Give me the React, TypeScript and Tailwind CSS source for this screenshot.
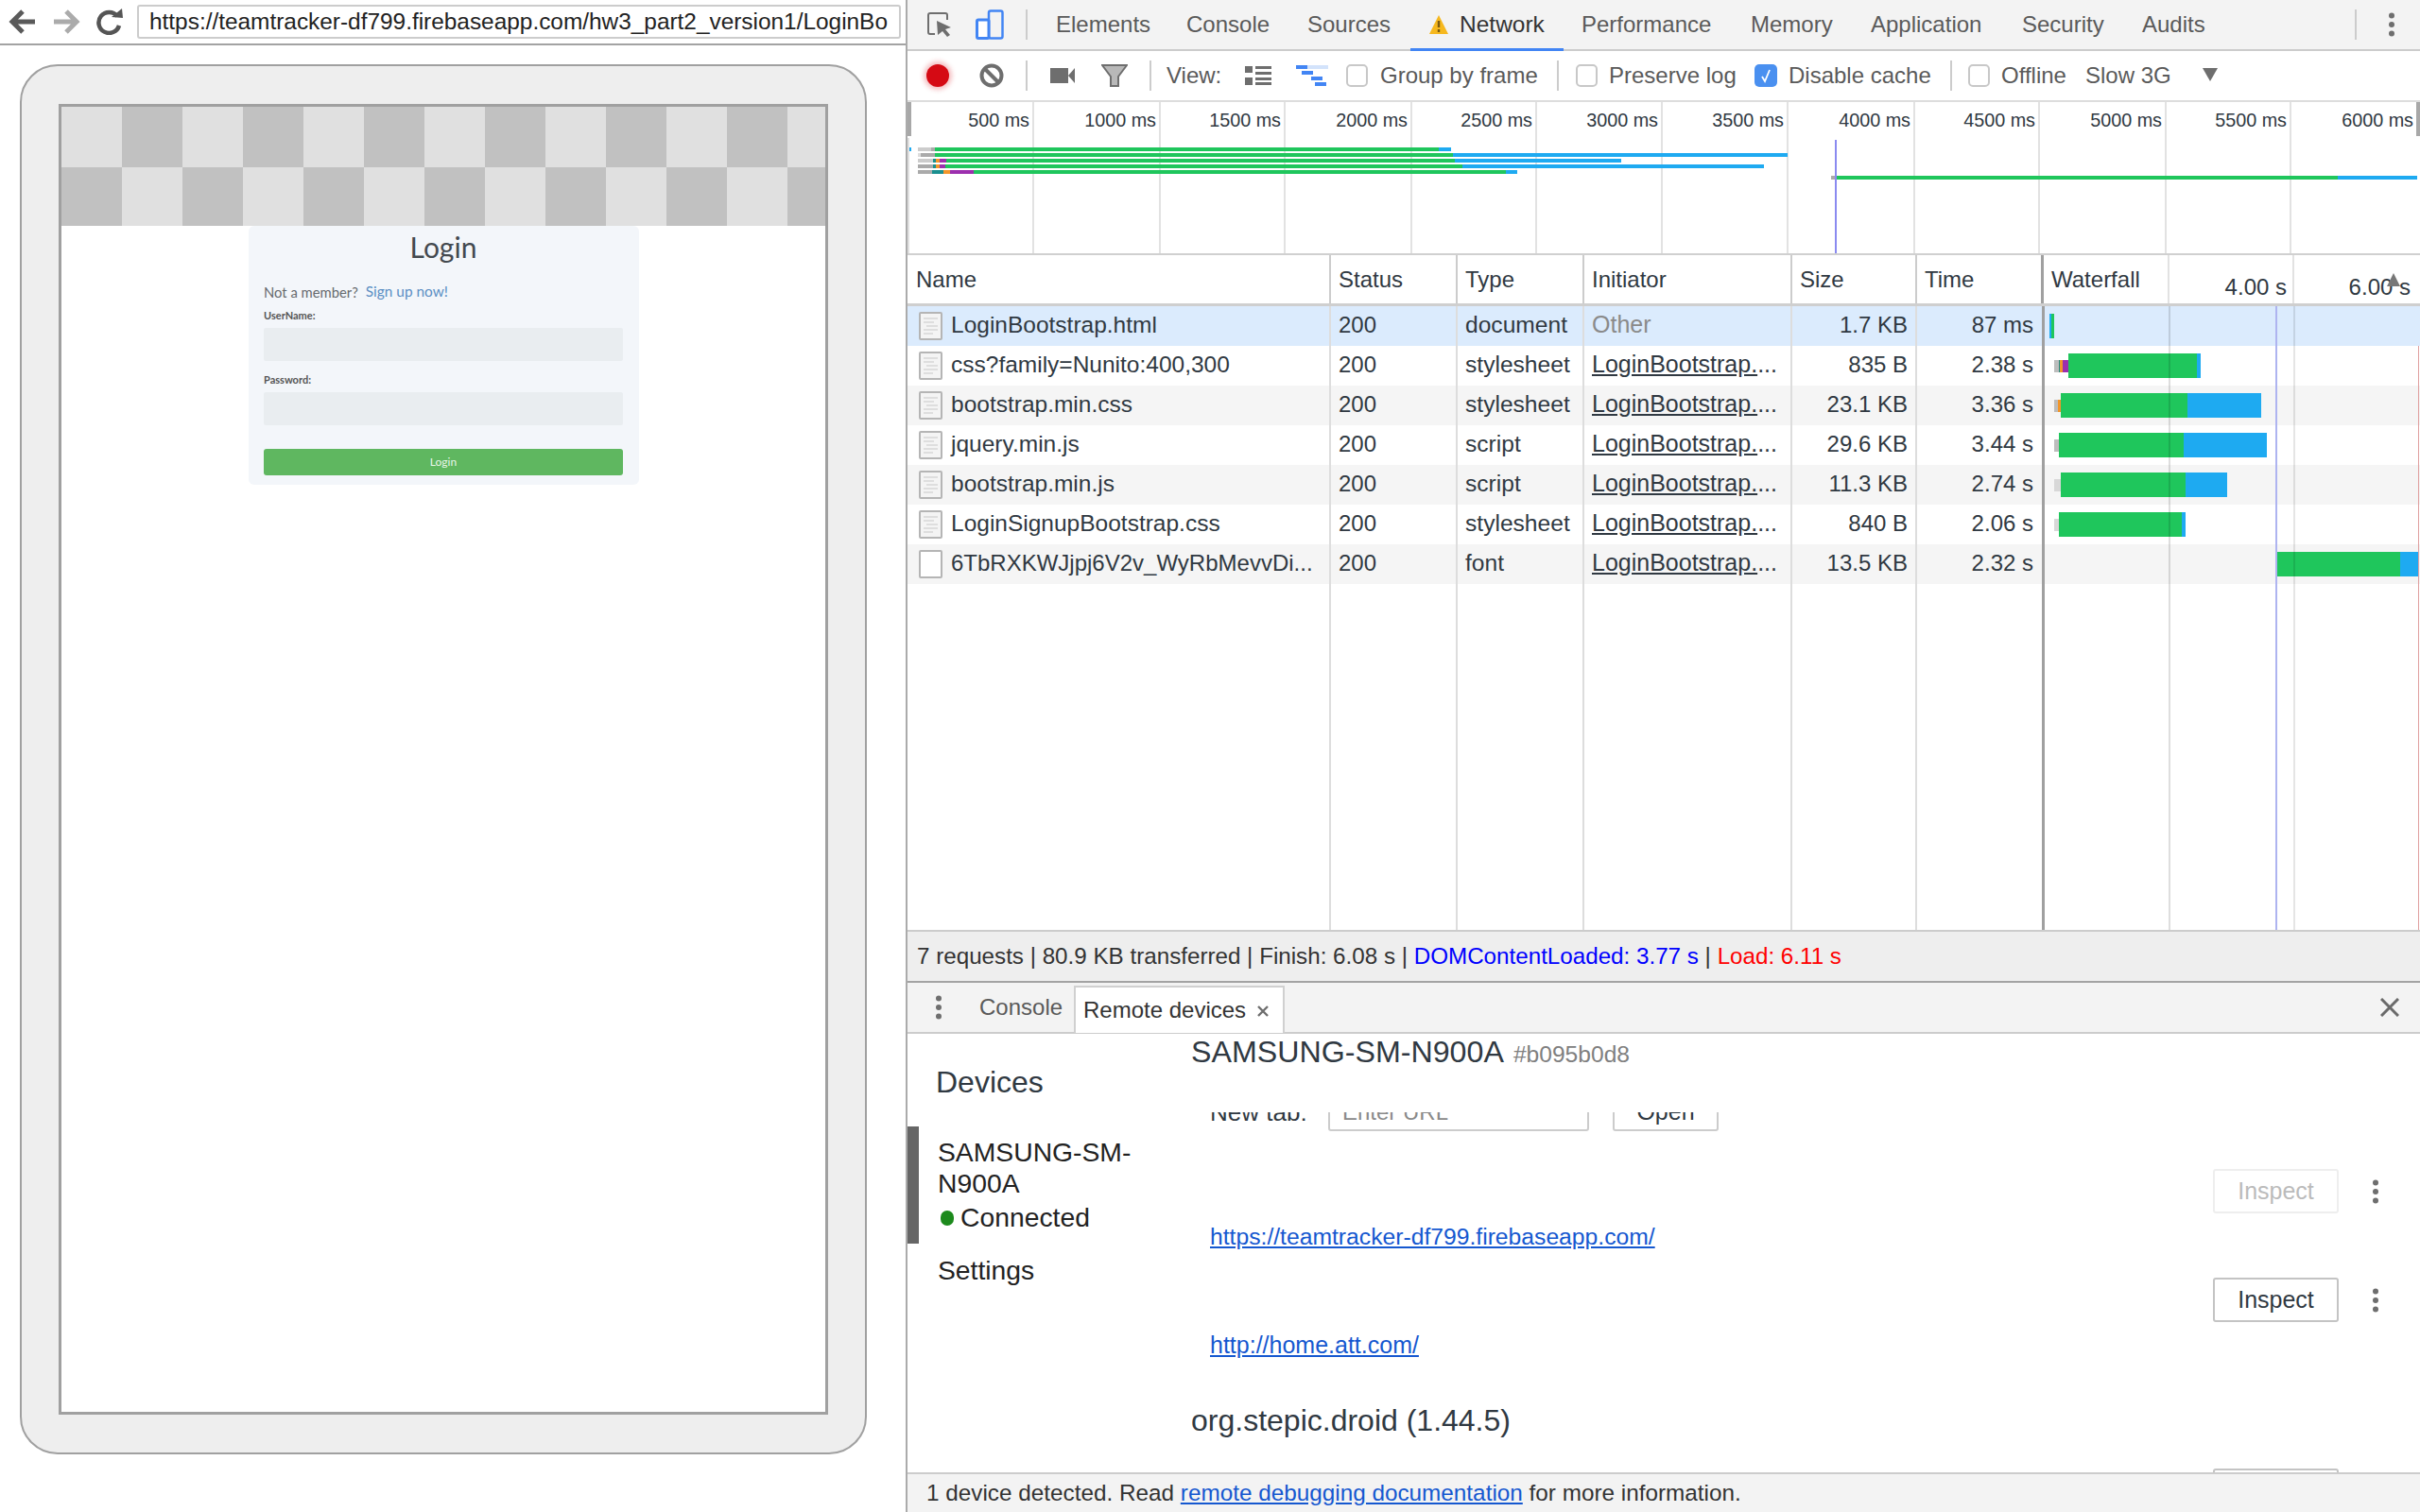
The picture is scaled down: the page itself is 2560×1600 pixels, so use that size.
import React from "react";

const Kebab = () => (
  <svg width="8" height="26" viewBox="0 0 8 26" className="shrink-0">
    <circle cx="4" cy="3.5" r="3" fill="#6e6e6e" />
    <circle cx="4" cy="13" r="3" fill="#6e6e6e" />
    <circle cx="4" cy="22.5" r="3" fill="#6e6e6e" />
  </svg>
);

const Sep = () => <div className="w-[2px] h-[32px] bg-[#ccc] shrink-0" />;

const Check = ({ on = false }: { on?: boolean }) =>
  on ? (
    <div className="w-[24px] h-[24px] rounded-[5px] bg-[#4a90f0] shrink-0 flex items-center justify-center">
      <svg width="14" height="16" viewBox="0 0 14 16">
        <path d="M3 9 L6 14 L11 2" fill="none" stroke="#fff" strokeWidth="1.8" />
      </svg>
    </div>
  ) : (
    <div className="w-[23px] h-[24px] rounded-[5px] border-2 border-[#c8c8c8] bg-white shrink-0" />
  );

const FileIcon = ({ blank = false }: { blank?: boolean }) => (
  <svg width="25" height="30" viewBox="0 0 25 30" className="shrink-0">
    <rect x="1" y="1" width="23" height="28" fill={blank ? "#fff" : "#f4f4f4"} stroke="#b5b5b5" strokeWidth="2" rx="1" />
    {!blank && (
      <g fill="#dedede">
        <rect x="5" y="6" width="15" height="2" />
        <rect x="5" y="10" width="11" height="2" />
        <rect x="8" y="14" width="12" height="2" />
        <rect x="5" y="18" width="15" height="2" />
        <rect x="5" y="22" width="10" height="2" />
      </g>
    )}
  </svg>
);

const ticks = [
  { c: "w-[134px]", t: "500 ms" },
  { c: "w-[134px]", t: "1000 ms" },
  { c: "w-[132px]", t: "1500 ms" },
  { c: "w-[134px]", t: "2000 ms" },
  { c: "w-[132px]", t: "2500 ms" },
  { c: "w-[133px]", t: "3000 ms" },
  { c: "w-[133px]", t: "3500 ms" },
  { c: "w-[134px]", t: "4000 ms" },
  { c: "w-[132px]", t: "4500 ms" },
  { c: "w-[134px]", t: "5000 ms" },
  { c: "w-[132px]", t: "5500 ms" },
  { c: "w-[132px]", t: "6000 ms" },
];

const G = "#1fc65c";
const B = "#1eaaf1";
const T = "#1a8f8f";
const O = "#f2962b";
const P = "#9c2fae";
const Gy = "#bdbdbd";

// overview chart segments: [x1, x2, row, colour], absolute page x
const ov: [number, number, number, string][] = [
  [961, 964, 0, B], [971, 985, 0, "#cccccc"], [985, 989, 0, "#aaaaaa"], [989, 1522, 0, G], [1522, 1535, 0, B],
  [971, 974, 1, "#dddddd"], [974, 989, 1, "#aaaaaa"], [989, 1537, 1, G], [1537, 1891, 1, B],
  [971, 987, 2, "#cccccc"], [987, 990, 2, T], [990, 994, 2, O], [994, 1001, 2, P], [1001, 1539, 2, G], [1539, 1715, 2, B],
  [971, 987, 3, "#aaaaaa"], [987, 990, 3, T], [990, 994, 3, O], [994, 1000, 3, P], [1000, 1547, 3, G], [1547, 1866, 3, B],
  [971, 986, 4, "#aaaaaa"], [986, 998, 4, T], [998, 1005, 4, O], [1005, 1030, 4, P], [1030, 1593, 4, G], [1593, 1605, 4, B],
  [1937, 1942, 5, "#aaaaaa"], [1942, 2473, 5, G], [2473, 2557, 5, B],
];

// waterfall bars: [x1, x2, row, colour, thin]
const wf: [number, number, number, string, boolean][] = [
  [2168, 2170, 0, "#1eaaf1", false], [2170, 2173, 0, G, false],
  [2173, 2178, 1, Gy, true], [2178, 2179, 1, T, true], [2179, 2182, 1, O, true], [2182, 2188, 1, P, true], [2188, 2324, 1, G, false], [2324, 2328, 1, B, false],
  [2173, 2177, 2, Gy, true], [2177, 2180, 2, O, true], [2180, 2314, 2, G, false], [2314, 2392, 2, B, false],
  [2173, 2178, 3, Gy, true], [2178, 2310, 3, G, false], [2310, 2398, 3, B, false],
  [2173, 2180, 4, "#d8d8d8", true], [2180, 2312, 4, G, false], [2312, 2356, 4, B, false],
  [2173, 2178, 5, "#d8d8d8", true], [2178, 2308, 5, G, false], [2308, 2312, 5, B, false],
  [2408, 2539, 6, G, false], [2539, 2560, 6, B, false],
];

const rows = [
  { n: "LoginBootstrap.html", t: "document", s: "1.7 KB", d: "87 ms", bg: "bg-[#dbebfd]" },
  { n: "css?family=Nunito:400,300", t: "stylesheet", s: "835 B", d: "2.38 s", bg: "bg-white" },
  { n: "bootstrap.min.css", t: "stylesheet", s: "23.1 KB", d: "3.36 s", bg: "bg-[#f5f5f5]" },
  { n: "jquery.min.js", t: "script", s: "29.6 KB", d: "3.44 s", bg: "bg-white" },
  { n: "bootstrap.min.js", t: "script", s: "11.3 KB", d: "2.74 s", bg: "bg-[#f5f5f5]" },
  { n: "LoginSignupBootstrap.css", t: "stylesheet", s: "840 B", d: "2.06 s", bg: "bg-white" },
  { n: "6TbRXKWJjpj6V2v_WyRbMevvDi...", t: "font", s: "13.5 KB", d: "2.32 s", bg: "bg-[#f5f5f5]" },
];

const cellLine = "h-full shrink-0 border-r-2 border-[#dddddd] flex items-center";

const topTabs = [
  { t: "Elements", c: "w-[138px]" },
  { t: "Console", c: "w-[128px]" },
  { t: "Sources", c: "w-[129px]" },
];
const topTabs2 = [
  { t: "Performance", c: "w-[179px]" },
  { t: "Memory", c: "w-[127px]" },
  { t: "Application", c: "w-[160px]" },
  { t: "Security", c: "w-[127px]" },
  { t: "Audits", c: "w-[225px]" },
];

export default function App() {
  return (
    <div className="w-[2560px] h-[1600px] flex overflow-hidden bg-white [font-family:'Liberation_Sans',Arial,sans-serif]">
      {/* Browser pane */}
      <div className="w-[960px] h-full shrink-0 border-r-2 border-[#ababab] flex flex-col">
        <div className="h-[48px] shrink-0 border-b-2 border-[#a3a3a3] flex items-center pl-[9px]">
          <svg width="30" height="28" viewBox="0 0 30 28" className="shrink-0">
            <path d="M28 14 H6 M15 3 L4 14 L15 25" fill="none" stroke="#5a5a5a" strokeWidth="5" />
          </svg>
          <svg width="30" height="28" viewBox="0 0 30 28" className="shrink-0 ml-[16px]">
            <path d="M2 14 H24 M15 3 L26 14 L15 25" fill="none" stroke="#ababab" strokeWidth="5" />
          </svg>
          <svg width="30" height="28" viewBox="0 0 30 28" className="shrink-0 ml-[16px]">
            <path d="M23 8 A11 11 0 1 0 25 18" fill="none" stroke="#555" strokeWidth="4.5" />
            <path d="M17 9 L29 10 L28 0 Z" fill="#555" />
          </svg>
          <div className="ml-[14px] w-[808px] h-[36px] shrink-0 border-2 border-[#cccccc] rounded-[3px] flex items-center pl-[11px] overflow-hidden whitespace-nowrap text-[24.4px] text-[#222]">
            https://teamtracker-df799.firebaseapp.com/hw3_part2_version1/LoginBo
          </div>
        </div>
        <div className="ml-[21px] mt-[20px] w-[896px] h-[1471px] rounded-[40px] border-2 border-[#a0a0a0] bg-[#eeeeee] pt-[40px] pl-[39px]">
          <div className="w-[814px] h-[1387px] border-[3px] border-[#a0a0a0] bg-white overflow-hidden [font-family:Lato,sans-serif]">
            <div className="flex flex-col w-[832px] overflow-hidden">
              <div className="flex h-[64px]">
                {[0, 1, 2, 3, 4, 5, 6, 7, 8, 9, 10, 11, 12].map((i) => (
                  <div key={i} className={i % 2 === 0 ? "w-[64px] bg-[#e0e0e0]" : "w-[64px] bg-[#c1c1c1]"} />
                ))}
              </div>
              <div className="flex h-[62px]">
                {[0, 1, 2, 3, 4, 5, 6, 7, 8, 9, 10, 11, 12].map((i) => (
                  <div key={i} className={i % 2 === 1 ? "w-[64px] bg-[#e0e0e0]" : "w-[64px] bg-[#c1c1c1]"} />
                ))}
              </div>
            </div>
            <div className="ml-[198px] w-[413px] h-[274px] bg-[#f3f6fa] rounded-[6px] pl-[16px] pr-[17px] flex flex-col">
              <div className="h-[44px] flex items-center justify-center text-[30px] text-[#43494f]">Login</div>
              <div className="mt-[15px] h-[22px] flex items-center text-[14.8px] text-[#666a6e]">
                Not a member?<span className="ml-[8px] text-[15.4px] text-[#5b8fc4]">Sign up now!</span>
              </div>
              <div className="mt-[6px] h-[16px] flex items-center text-[11px] font-bold text-[#555]">UserName:</div>
              <div className="mt-[5px] h-[35px] bg-[#e9edf0] rounded-[2px]" />
              <div className="mt-[12px] h-[16px] flex items-center text-[11px] font-bold text-[#555]">Password:</div>
              <div className="mt-[5px] h-[35px] bg-[#e9edf0] rounded-[2px]" />
              <div className="mt-[25px] h-[28px] bg-[#5fb760] rounded-[3px] flex items-center justify-center text-[12px] text-[#e8f5e8]">Login</div>
            </div>
          </div>
        </div>
      </div>

      {/* DevTools */}
      <div className="w-[1600px] h-full shrink-0 flex flex-col text-[24px] text-[#303942]">
        {/* Top tabs */}
        <div className="h-[54px] shrink-0 bg-[#f3f3f3] border-b-2 border-[#cccccc] flex items-center text-[#5a5a5a] relative">
          <svg width="28" height="26" viewBox="0 0 28 26" className="ml-[20px] shrink-0">
            <path d="M9 23 H4 a2 2 0 0 1 -2 -2 V3 a2 2 0 0 1 2 -2 H20 a2 2 0 0 1 2 2 V8" fill="none" stroke="#6e6e6e" strokeWidth="2" />
            <path d="M11 9 L26 16 L20 18 L25 24 L22 26 L17 20 L12 24 Z" fill="#6e6e6e" />
          </svg>
          <svg width="30" height="32" viewBox="0 0 30 32" className="ml-[24px] shrink-0">
            <rect x="14" y="1.5" width="14.5" height="29" rx="2" fill="none" stroke="#4285f4" strokeWidth="2.5" />
            <rect x="1.5" y="11" width="12.5" height="19.5" rx="1.5" fill="#fff" stroke="#4285f4" strokeWidth="3" />
          </svg>
          <div className="ml-[23px] shrink-0"><Sep /></div>
          <div className="ml-[30px] flex items-center">
            {topTabs.map((t) => (
              <div key={t.t} className={t.c}>{t.t}</div>
            ))}
            <svg width="20" height="20" viewBox="0 0 20 20" className="shrink-0">
              <path d="M10 0 L20 20 H0 Z" fill="#f6b81e" />
              <path d="M10 6 V13 M10 15 V18" stroke="#7a5a10" strokeWidth="2.4" />
            </svg>
            <div className="ml-[12px] w-[129px] text-[#333] text-[24.5px]">Network</div>
            {topTabs2.map((t) => (
              <div key={t.t} className={t.c}>{t.t}</div>
            ))}
            <Sep />
            <div className="ml-[33px]"><Kebab /></div>
          </div>
          <div className="absolute left-[532px] top-[51px] w-[162px] h-[3px] bg-[#4285f4]" />
        </div>

        {/* Network toolbar */}
        <div className="h-[54px] shrink-0 border-b-2 border-[#dddddd] flex items-center text-[#5a5a5a]">
          <div className="ml-[20px] w-[24px] h-[24px] rounded-full bg-[#d50a14] shrink-0 shadow-[0_0_5px_3px_rgba(220,40,50,0.3)]" />
          <svg width="26" height="26" viewBox="0 0 26 26" className="ml-[32px] shrink-0">
            <circle cx="13" cy="13" r="10.5" fill="none" stroke="#6e6e6e" strokeWidth="4" />
            <path d="M6 6 L20 20" stroke="#6e6e6e" strokeWidth="4" />
          </svg>
          <div className="ml-[23px] shrink-0"><Sep /></div>
          <svg width="26" height="16" viewBox="0 0 26 16" className="ml-[24px] shrink-0">
            <rect x="0" y="0" width="19" height="16" fill="#6e6e6e" />
            <path d="M19 8 L26 0 V16 Z" fill="#6e6e6e" />
          </svg>
          <svg width="28" height="24" viewBox="0 0 28 24" className="ml-[28px] shrink-0">
            <path d="M1 1 H27 L18 13 V23 H10 V13 Z" fill="#b8b8b8" stroke="#6e6e6e" strokeWidth="2" />
          </svg>
          <div className="ml-[23px] shrink-0"><Sep /></div>
          <div className="ml-[16px] w-[83px] shrink-0">View:</div>
          <svg width="28" height="20" viewBox="0 0 28 20" className="shrink-0">
            <g fill="#6e6e6e">
              <rect x="0" y="0" width="8" height="7" />
              <rect x="0" y="12" width="8" height="8" />
              <rect x="11" y="0" width="17" height="3" />
              <rect x="11" y="6" width="17" height="3" />
              <rect x="11" y="12" width="17" height="3" />
              <rect x="11" y="17" width="17" height="3" />
            </g>
          </svg>
          <svg width="34" height="22" viewBox="0 0 34 22" className="ml-[26px] shrink-0">
            <rect x="0" y="0" width="12" height="4" fill="#4285f4" />
            <rect x="12" y="0" width="22" height="4" fill="#d3e3fb" />
            <rect x="6" y="6" width="12" height="4" fill="#4285f4" />
            <rect x="16" y="12" width="12" height="4" fill="#4285f4" />
            <rect x="20" y="18" width="12" height="4" fill="#4285f4" />
          </svg>
          <div className="ml-[19px]"><Check /></div>
          <div className="ml-[13px] w-[187px] shrink-0">Group by frame</div>
          <Sep />
          <div className="ml-[18px]"><Check /></div>
          <div className="ml-[12px] w-[154px] shrink-0">Preserve log</div>
          <Check on />
          <div className="ml-[12px] w-[171px] shrink-0">Disable cache</div>
          <Sep />
          <div className="ml-[17px]"><Check /></div>
          <div className="ml-[12px] w-[89px] shrink-0">Offline</div>
          <div className="w-[124px] shrink-0">Slow 3G</div>
          <svg width="16" height="14" viewBox="0 0 16 14" className="shrink-0 -mt-[2px]">
            <path d="M0 0 H16 L8 14 Z" fill="#6e6e6e" />
          </svg>
        </div>

        {/* Overview */}
        <div className="h-[162px] shrink-0 border-b-2 border-[#d0d0d0] relative flex text-[19.8px] text-[#303942]">
          {ticks.map((t, i) => (
            <div
              key={t.t}
              className={
                t.c +
                " h-full shrink-0 flex justify-end pt-[7px] pr-[3px] " +
                (i < 11 ? "border-r-2 border-[#e2e2e2]" : "")
              }
            >
              <span className="h-[24px] leading-[24px]">{t.t}</span>
            </div>
          ))}
          <svg width="1600" height="160" viewBox="0 0 1600 160" className="absolute left-0 top-0">
            {ov.map(([a, b, r, c], i) => (
              <rect key={i} x={a - 960} y={48 + r * 6} width={b - a} height="4" fill={c} />
            ))}
            <rect x="981" y="40" width="2" height="120" fill="#8a8af0" />
          </svg>
          <div className="absolute left-0 top-0 w-[4px] h-[36px] bg-[#a8a8a8]" />
          <div className="absolute left-0 top-[38px] w-[2px] h-[122px] bg-[#e0e0e0]" />
          <div className="absolute right-0 top-0 w-[4px] h-[36px] bg-[#a8a8a8]" />
        </div>

        {/* Table header */}
        <div className="h-[54px] shrink-0 border-b-[3px] border-[#cfcfcf] flex items-center relative">
          <div className="w-[448px] h-full shrink-0 border-r-2 border-[#cccccc] flex items-center pl-[9px]">Name</div>
          <div className="w-[134px] h-full shrink-0 border-r-2 border-[#cccccc] flex items-center pl-[8px]">Status</div>
          <div className="w-[134px] h-full shrink-0 border-r-2 border-[#cccccc] flex items-center pl-[8px]">Type</div>
          <div className="w-[220px] h-full shrink-0 border-r-2 border-[#cccccc] flex items-center pl-[8px]">Initiator</div>
          <div className="w-[132px] h-full shrink-0 border-r-2 border-[#cccccc] flex items-center pl-[8px]">Size</div>
          <div className="w-[134px] h-full shrink-0 border-r-[3px] border-[#a0a0a0] flex items-center pl-[8px]">Time</div>
          <div className="w-[133px] h-full shrink-0 border-r-2 border-[#e2e2e2] flex items-center pl-[8px]">Waterfall</div>
          <div className="w-[132px] h-full shrink-0 border-r-2 border-[#e2e2e2] flex justify-end pr-[6px] pt-[16px]">4.00 s</div>
          <div className="w-[132px] h-full shrink-0 flex justify-end pr-[9px] pt-[16px]">6.00 s</div>
          <svg width="14" height="14" viewBox="0 0 14 14" className="absolute left-[1565px] top-[19px]">
            <path d="M7 0 L14 14 H0 Z" fill="#777" />
          </svg>
        </div>

        {/* Table body */}
        <div className="h-[660px] shrink-0 relative flex flex-col">
          {rows.map((r, i) => (
            <div key={r.n} className={"h-[42px] shrink-0 flex items-center " + r.bg}>
              <div className={cellLine + " w-[448px] pl-[12px]"}>
                <FileIcon blank={i === 6} />
                <span className={"ml-[9px] pb-[2px] whitespace-nowrap " + (i === 6 ? "text-[24px]" : "text-[24.5px]")}>{r.n}</span>
              </div>
              <div className={cellLine + " w-[134px] pl-[8px] pb-[2px]"}>200</div>
              <div className={cellLine + " w-[134px] pl-[8px] pb-[2px] text-[24.6px]"}>{r.t}</div>
              <div className={cellLine + " w-[220px] pl-[8px] pb-[2px] whitespace-nowrap text-[25px]"}>
                {i === 0 ? (
                  <span className="text-[#8a8a8a]">Other</span>
                ) : (
                  <span>
                    <span className="underline">LoginBootstrap.</span>...
                  </span>
                )}
              </div>
              <div className={cellLine + " w-[132px] justify-end pr-[8px] pb-[2px]"}>{r.s}</div>
              <div className={cellLine + " w-[134px] justify-end pr-[9px] pb-[2px]"}>{r.d}</div>
              <div className="flex-1" />
            </div>
          ))}
          <div className="flex-1 flex">
            <div className={cellLine + " w-[448px]"} />
            <div className={cellLine + " w-[134px]"} />
            <div className={cellLine + " w-[134px]"} />
            <div className={cellLine + " w-[220px]"} />
            <div className={cellLine + " w-[132px]"} />
            <div className={cellLine + " w-[134px]"} />
          </div>
          <svg width="399" height="660" viewBox="0 0 399 660" className="absolute left-[1200px] top-0">
            {wf.map(([a, b, r, c, thin], i) => (
              <rect key={i} x={a - 2160} y={thin ? 42 * r + 15 : 42 * r + 8} width={b - a} height={thin ? 13 : 26} fill={c} />
            ))}
            <rect x="0" y="0" width="3" height="660" fill="#a0a0a0" />
            <rect x="134" y="0" width="2" height="660" fill="#000" fillOpacity="0.13" />
            <rect x="266" y="0" width="2" height="660" fill="#000" fillOpacity="0.1" />
            <rect x="247" y="0" width="2" height="660" fill="#aeb4f0" />
            <rect x="398" y="42" width="1" height="618" fill="#e0a0a0" />
          </svg>
        </div>

        {/* Summary */}
        <div className="h-[56px] shrink-0 border-t-2 border-b-2 border-t-[#cccccc] border-b-[#a3a3a3] bg-[#eeeeee] flex items-center pl-[10px] whitespace-nowrap text-[#333] text-[24.2px]">
          7 requests | 80.9 KB transferred | Finish: 6.08 s |&nbsp;
          <span className="text-[#0000ff]">DOMContentLoaded: 3.77 s</span>&nbsp;|&nbsp;
          <span className="text-[#ff0000]">Load: 6.11 s</span>
        </div>

        {/* Drawer tabs */}
        <div className="h-[54px] shrink-0 bg-[#f3f3f3] border-b-2 border-[#cccccc] flex items-end text-[#5a5a5a] relative">
          <div className="ml-[29px] mb-[13px]"><Kebab /></div>
          <div className="ml-[39px] w-[100px] h-[52px] flex items-center shrink-0">Console</div>
          <div className="w-[223px] h-[50px] shrink-0 -mb-[1px] bg-white border-2 border-b-0 border-[#d0d0d0] flex items-center pl-[8px] text-[#333]">
            Remote devices
            <svg width="14" height="14" viewBox="0 0 14 14" className="ml-[11px] mt-[2px] shrink-0">
              <path d="M2 2 L12 12 M12 2 L2 12" stroke="#6e6e6e" strokeWidth="2.4" />
            </svg>
          </div>
          <svg width="20" height="20" viewBox="0 0 20 20" className="absolute left-[1558px] top-[16px]">
            <path d="M1 1 L19 19 M19 1 L1 19" stroke="#6a6a6a" strokeWidth="3" />
          </svg>
        </div>

        {/* Drawer content */}
        <div className="h-[464px] shrink-0 flex overflow-hidden">
          <div className="w-[300px] shrink-0 text-[28.3px] leading-[33px] text-[#222]">
            <div className="pl-[30px] pt-[31px] h-[98px] text-[32px] leading-[40px] text-[#303942]">Devices</div>
            <div className="h-[124px] border-l-[12px] border-[#666666] pl-[20px] pt-[11px]">
              <div>SAMSUNG-SM-</div>
              <div>N900A</div>
              <div className="mt-[3px] flex items-center">
                <div className="ml-[3px] w-[14px] h-[16px] rounded-full bg-[#1c8a1c] shrink-0" />
                <span className="ml-[7px]">Connected</span>
              </div>
            </div>
            <div className="pl-[32px] mt-[12px]">Settings</div>
          </div>
          <div className="w-[1300px] shrink-0 flex flex-col">
            <div className="h-[83px] shrink-0 pt-[1px] flex items-baseline text-[32.2px] leading-[36px]">
              SAMSUNG-SM-N900A
              <span className="ml-[10px] text-[24.6px] text-[#808080]">#b095b0d8</span>
            </div>
            <div className="flex-1 overflow-hidden">
              <div className="-mt-[20px] h-[40px] flex items-center text-[#303942]">
                <div className="ml-[20px] w-[125px] shrink-0 text-[26px]">New tab:</div>
                <div className="w-[276px] h-[40px] shrink-0 border-2 border-[#cccccc] rounded-[3px] flex items-center pl-[13px] text-[#8a8a8a]">Enter URL</div>
                <div className="ml-[25px] w-[112px] h-[40px] shrink-0 border-2 border-[#cccccc] rounded-[3px] flex items-center justify-center text-[25px]">Open</div>
              </div>
              <div className="mt-[40px] h-[47px] flex items-center justify-end">
                <div className="w-[133px] h-[47px] border-2 border-[#eeeeee] rounded-[3px] flex items-center justify-center text-[#bbbbbb] text-[25px]">Inspect</div>
                <div className="ml-[35px] mr-[43px]"><Kebab /></div>
              </div>
              <div className="h-[49px] pl-[20px] flex items-center">
                <span className="underline text-[#1558d0] text-[24.7px]">https://teamtracker-df799.firebaseapp.com/</span>
              </div>
              <div className="mt-[19px] h-[47px] flex items-center justify-end">
                <div className="w-[133px] h-[47px] border-2 border-[#c4c4c4] rounded-[3px] flex items-center justify-center text-[#303942] text-[25px]">Inspect</div>
                <div className="ml-[35px] mr-[43px]"><Kebab /></div>
              </div>
              <div className="h-[49px] pl-[20px] flex items-center">
                <span className="underline text-[#1558d0] text-[25px]">http://home.att.com/</span>
              </div>
              <div className="mt-[31px] h-[48px] flex items-center text-[32px]">org.stepic.droid (1.44.5)</div>
              <div className="mt-[27px] h-[47px] flex justify-end">
                <div className="w-[133px] h-[47px] border-2 border-[#c4c4c4] rounded-[3px]" />
                <div className="ml-[35px] mr-[43px] w-[8px]" />
              </div>
            </div>
          </div>
        </div>

        {/* Status */}
        <div className="h-[42px] shrink-0 border-t-2 border-[#cccccc] bg-[#f3f3f3] flex items-center pl-[20px] whitespace-nowrap text-[#333] text-[24.3px]">
          1 device detected. Read&nbsp;<span className="underline text-[#1558d0]">remote debugging documentation</span>&nbsp;for more information.
        </div>
      </div>
    </div>
  );
}
